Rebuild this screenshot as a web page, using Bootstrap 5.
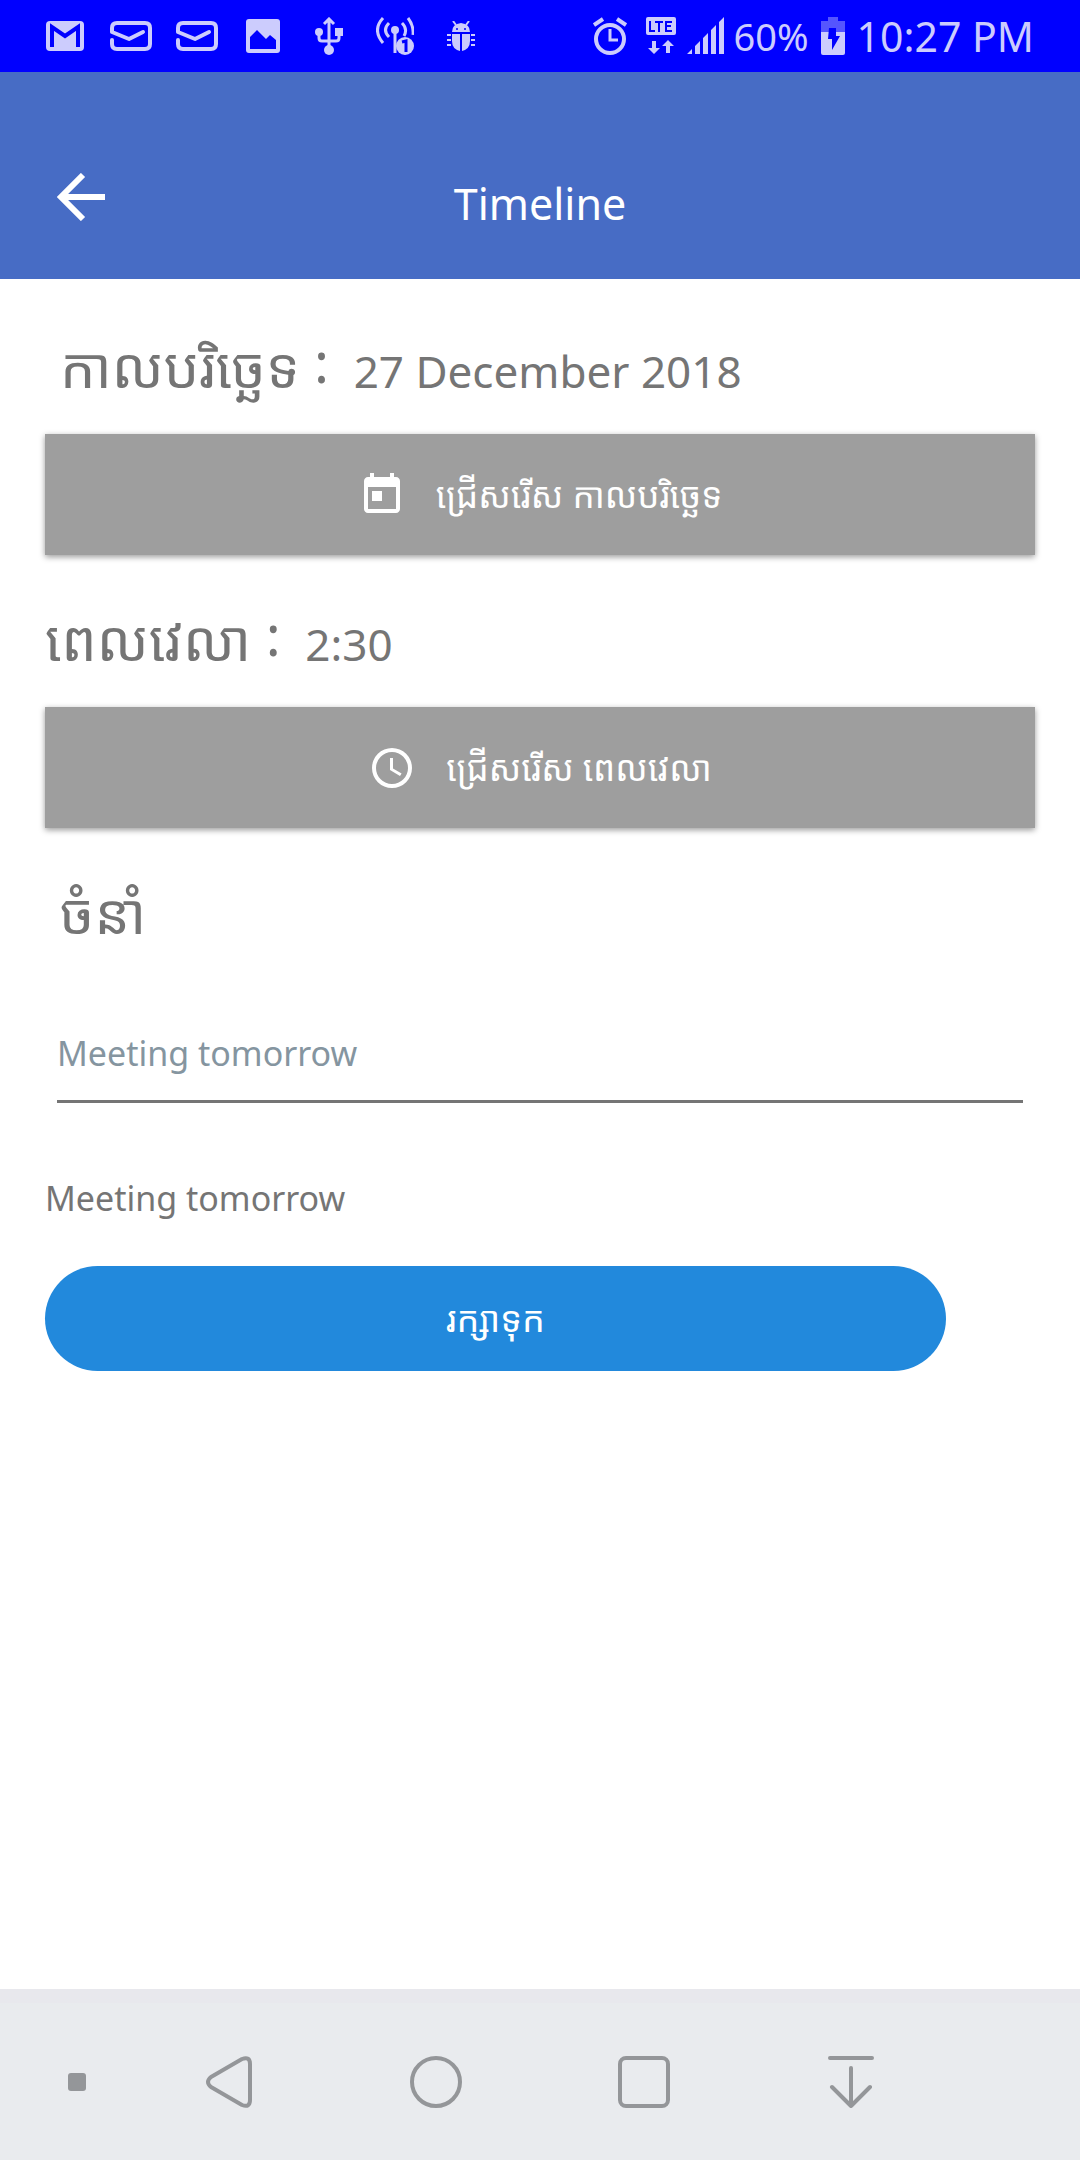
<!DOCTYPE html>
<html lang="km">
<head>
<meta charset="utf-8">
<meta name="viewport" content="width=device-width, initial-scale=1">
<title>Timeline</title>
<link href="https://cdn.jsdelivr.net/npm/bootstrap@5.3.0/dist/css/bootstrap.min.css" rel="stylesheet">
<style>
body{font-family:"Noto Sans","Noto Sans Khmer",sans-serif;color:#757575;background:#fff}
.status-bar{height:72px;background:#00f;color:#ccccfd;padding:0 46px 0 32px}
.status-cell{width:66px}
.status-text{font-size:38px;line-height:72px}
.status-clock{font-size:41px;line-height:72px}
.battery{margin:0 12px}
.app-header{height:207px;background:#476cc5;color:#fff;padding:101px 56px 0}
.back-link,.header-side{width:50px}
.screen-title{font-size:43px;line-height:62px;margin:0;font-weight:400}
.main-form{padding:3px 45px 0}
.field-title{font-size:56px;font-weight:400;line-height:72px;height:152px;padding-top:48px;margin:0;white-space:pre}
.label-colon{vertical-align:5px;line-height:1}
.field-value{font-size:44px;line-height:1;margin-left:10px}
.lead-in{padding-left:15px}
.pick-btn{height:121px;border:0;border-radius:0;background:#9e9e9e;color:#fff;font-size:35px;line-height:60px;gap:30px;box-shadow:0 2px 6px rgba(0,0,0,.4)}
.note-input,.note-input:focus{border:0;border-bottom:3px solid #757575;border-radius:0;padding:0 0 18px;height:80px;font-size:34px;color:#8595a0;box-shadow:none;background:transparent}
.note-wrap{padding:43px 12px 0}
.note-echo{font-size:34px;line-height:50px;padding:70px 0 43px;margin:0}
.save-btn{width:91%;height:105px;border:0;background:#2289dc;color:#fff;font-size:36px;line-height:60px}
.nav-strip{height:171px;background:#e9ebee;border-top:14px solid #e8e8ed}
.nav-side{width:125px;padding-left:28px}
.nav-strip button{border:0;background:none;padding:0;line-height:0}
</style>
<script src="https://cdn.jsdelivr.net/npm/bootstrap@5.3.0/dist/js/bootstrap.bundle.min.js"></script>
</head>
<body class="d-flex flex-column min-vh-100">
<div class="status-bar d-flex align-items-center justify-content-between">
  <div class="d-flex align-items-center">
    <span class="status-cell d-flex justify-content-center"><svg width="38" height="30" viewBox="0 0 38 30"><rect width="38" height="30" rx="4" fill="currentColor"/><path d="M6 26V6l13 9 13-9v20" fill="none" stroke="#00f" stroke-width="4"/></svg></span>
    <span class="status-cell d-flex justify-content-center"><svg width="42" height="30" viewBox="0 0 42 30" fill="none" stroke="currentColor" stroke-width="4" stroke-linecap="round" stroke-linejoin="round"><path d="M2 19v4q0 5 5 5h28q5 0 5-5V7q0-5-5-5H7Q2 2 2 7v4l17 7 14-7"/></svg></span>
    <span class="status-cell d-flex justify-content-center"><svg width="42" height="30" viewBox="0 0 42 30" fill="none" stroke="currentColor" stroke-width="4" stroke-linecap="round" stroke-linejoin="round"><path d="M2 19v4q0 5 5 5h28q5 0 5-5V7q0-5-5-5H7Q2 2 2 7v4l17 7 14-7"/></svg></span>
    <span class="status-cell d-flex justify-content-center"><svg width="34" height="34" viewBox="0 0 34 34"><rect width="34" height="34" rx="3" fill="currentColor"/><path d="M4 30V18l7-7 9 9 4-4 6 5v9z" fill="#00f"/></svg></span>
    <span class="status-cell d-flex justify-content-center"><svg width="28" height="38" viewBox="0 0 28 38" fill="none" stroke="currentColor" stroke-width="3"><path d="M14 33V3M9 7l5-5 5 5M4 15v6q0 3 3 3h14q3 0 3-3v-6"/><g fill="currentColor" stroke="none"><circle cx="14" cy="33" r="5"/><circle cx="4" cy="15" r="4"/><path d="M20 11h8v8h-8z"/></g></svg></span>
    <span class="status-cell d-flex justify-content-center"><svg width="38" height="38" viewBox="0 0 38 38" fill="none" stroke="currentColor" stroke-width="3"><path d="M7 1q-11 12 0 25M32 1q6 8 5 17M13 6q-7 7 0 14M26 6q6 6 2 13M19 13v23"/><circle cx="19" cy="13" r="4" fill="currentColor" stroke="none"/><circle cx="29" cy="29" r="9" fill="currentColor" stroke="none"/><path d="M26 25l4-1v11" stroke="#00f"/></svg></span>
    <span class="status-cell d-flex justify-content-center"><svg width="28" height="30" viewBox="0 0 28 30" fill="currentColor"><path d="M5 11q0-8 9-9 9 1 9 9zM5 13h8v17Q5 28 5 20zM15 13h8v7q0 8-8 10z"/><path d="M9 4L6 0M19 4l3-4M0 14h4M0 19h4M0 24h4M24 14h4M24 19h4M24 24h4" stroke="currentColor" stroke-width="2"/><circle cx="10" cy="8" r="1" fill="#00f"/><circle cx="18" cy="8" r="1" fill="#00f"/></svg></span>
  </div>
  <div class="d-flex align-items-center">
    <svg width="34" height="38" viewBox="0 0 34 38" fill="none" stroke="currentColor" stroke-width="4"><circle cx="17" cy="22" r="14"/><path d="M1 8l9-6M33 8l-9-6" /><path d="M17 12v11h8" stroke-width="3"/></svg>
    <svg class="ms-3 me-2" width="36" height="38" viewBox="-2 0 36 38" fill="currentColor"><rect x="1" width="30" height="18" rx="2"/><path d="M5 4v10h5M10 5h8M14 5v10M27 5h-6v9h6M21 9h5" fill="none" stroke="#00f" stroke-width="2"/><path d="M7 24h4v7h4l-6 6-6-6h4zM21 36h4v-7h4l-6-6-6 6h4z"/></svg>
    <svg width="38" height="38" viewBox="0 0 38 38" fill="currentColor"><path d="M0 37l5-5v5zM8 29l5-5v13H8zM16 21l5-5v21h-5zM24 13l5-5v29h-5zM32 5l5-5v37h-5z"/></svg>
    <span class="status-text ms-2">60%</span>
    <svg class="battery" width="24" height="38" viewBox="0 0 24 38"><path d="M7 0h10v4h7v11H0V4h7z" fill="#5555fe"/><path d="M0 15h24v21q0 2-2 2H2q-2 0-2-2z" fill="currentColor"/><path d="M8 11h7v8h4l-8 14v-11H7z" fill="#00f"/></svg>
    <span class="status-clock">10:27 PM</span>
  </div>
</div>
<header class="app-header d-flex justify-content-between align-items-start">
  <a href="#" class="back-link text-white" aria-label="Back"><svg class="d-block" width="50" height="48" viewBox="0 0 50 48" fill="none" stroke="currentColor" stroke-width="6"><path d="M49 24H5M27 2L5 24l22 22"/></svg></a>
  <h1 class="screen-title">Timeline</h1>
  <span class="header-side"></span>
</header>
<main class="main-form flex-grow-1">
  <h2 class="field-title lead-in">កាលបរិច្ឆេទ <span class="label-colon">:</span> <span class="field-value">27 December 2018</span></h2>
  <button type="button" class="pick-btn btn w-100 d-flex align-items-center justify-content-center"><svg width="48" height="48" viewBox="0 0 24 24" fill="currentColor"><path d="M19 3h-1V1h-2v2H8V1H6v2H5c-1.110 0-1.990.9-1.990 2L3 19c0 1.100.890 2 2 2h14c1.100 0 2-.9 2-2V5c0-1.100-.9-2-2-2zm0 16H5V8h14v11zM7 10h5v5H7z"/></svg><span>ជ្រើសរើស កាលបរិច្ឆេទ</span></button>
  <h2 class="field-title">ពេលវេលា <span class="label-colon">:</span> <span class="field-value">2:30</span></h2>
  <button type="button" class="pick-btn btn w-100 d-flex align-items-center justify-content-center"><svg width="48" height="48" viewBox="0 0 24 24" fill="currentColor"><path d="M12 2a10 10 0 1 0 0 20 10 10 0 0 0 0-20zm0 18a8 8 0 1 1 0-16 8 8 0 0 1 0 16zm.5-13H11v6l5 3 .8-1.200-4.300-2.600z"/></svg><span>ជ្រើសរើស ពេលវេលា</span></button>
  <h2 class="field-title lead-in"><label for="note">ចំនាំ</label></h2>
  <div class="note-wrap"><input id="note" type="text" class="note-input form-control" value="Meeting tomorrow"></div>
  <p class="note-echo">Meeting tomorrow</p>
  <button type="submit" class="save-btn btn rounded-pill">រក្សាទុក</button>
</main>
<nav class="nav-strip d-flex align-items-center" aria-label="System navigation">
  <div class="nav-side d-flex justify-content-center"><button type="button" aria-label="Pin"><svg width="18" height="18"><rect width="18" height="18" rx="3" fill="#949699"/></svg></button></div>
  <div class="d-flex flex-grow-1">
    <button type="button" class="flex-fill" aria-label="Back"><svg width="52" height="52" viewBox="0 0 52 52" fill="none" stroke="#949699" stroke-width="4" stroke-linejoin="round"><path d="M39 3L8 21q-6 5 0 10l31 18q8 3 8-5V8q0-8-8-5z"/></svg></button>
    <button type="button" class="flex-fill" aria-label="Home"><svg width="52" height="52" viewBox="0 0 52 52" fill="none" stroke="#949699" stroke-width="4"><circle cx="26" cy="26" r="24"/></svg></button>
    <button type="button" class="flex-fill" aria-label="Recent apps"><svg width="52" height="52" viewBox="0 0 52 52" fill="none" stroke="#949699" stroke-width="4"><rect x="2" y="2" width="48" height="48" rx="6"/></svg></button>
    <button type="button" class="flex-fill" aria-label="Hide"><svg width="52" height="52" viewBox="0 0 52 52" fill="none" stroke="#949699" stroke-width="4" stroke-linecap="round" stroke-linejoin="round"><path d="M5 2h42M26 12v38M7 31l19 19 19-19"/></svg></button>
  </div>
  <div class="nav-side"></div>
</nav>
</body>
</html>
